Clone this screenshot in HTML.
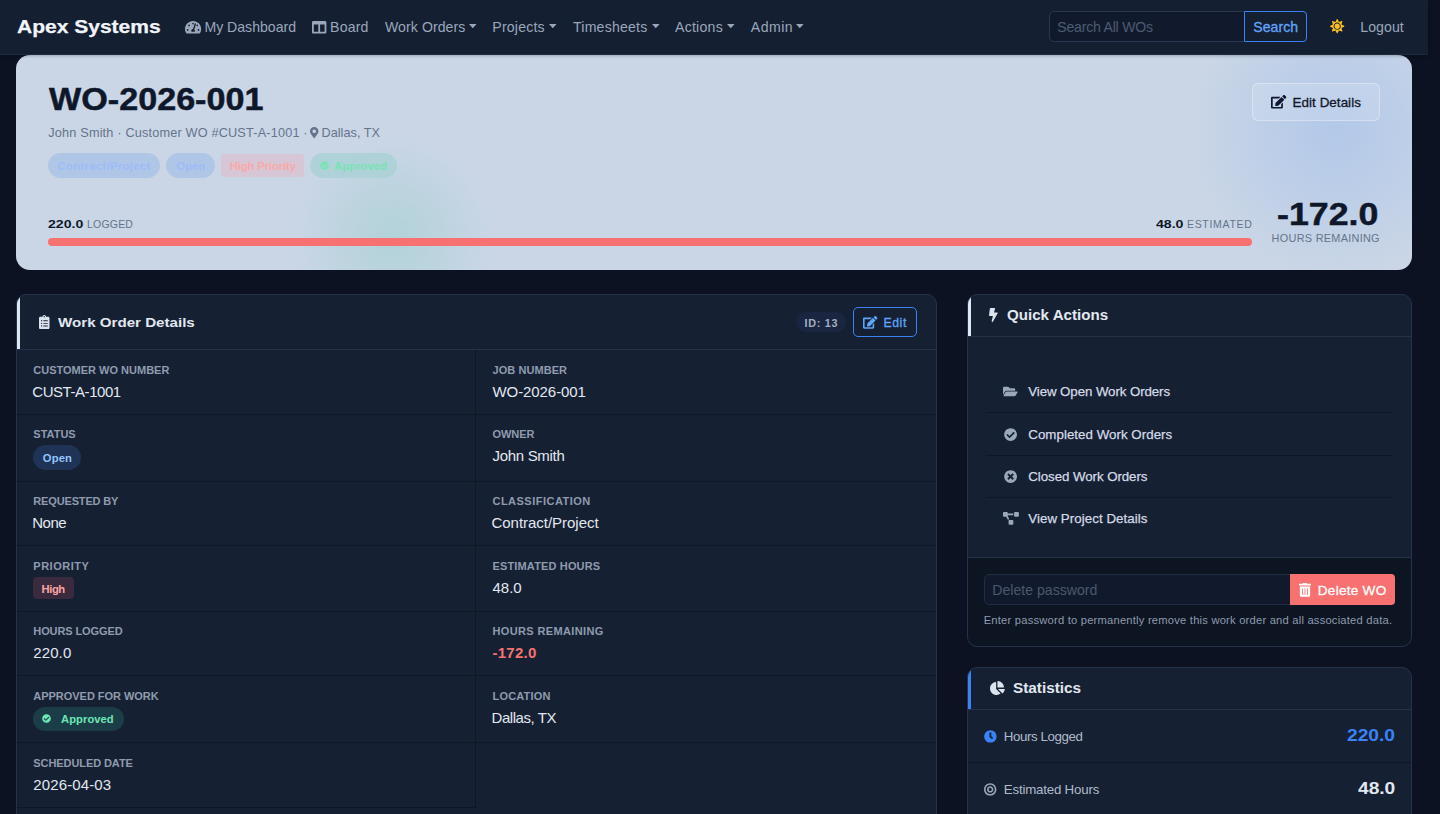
<!DOCTYPE html>
<html lang="en">
<head>
<meta charset="utf-8">
<title>WO-2026-001 · Apex Systems</title>
<style>
*{box-sizing:border-box;margin:0;padding:0}
html,body{width:1440px;height:814px;overflow:hidden}
body{background:#0c1221;font-family:"Liberation Sans",sans-serif;position:relative}
.t{position:absolute;white-space:nowrap;transform-origin:0 50%;display:block}
.b{position:absolute}
.ic{position:absolute;display:block;overflow:visible}
a{text-decoration:none}
h1,h2{font-weight:700}
#nav{position:absolute;left:0;top:0;width:1428px;height:55px;background:#151f32;border-bottom:1px solid #1f2b41;z-index:5;box-shadow:0 1px 3px rgba(0,0,0,.25)}
#search{position:absolute;left:1049px;top:11px;width:196px;height:31px;border:1px solid #293750;border-radius:5px 0 0 5px;background:#111a2c}
#sbtn{position:absolute;left:1244px;top:11px;width:63px;height:31px;border:1px solid #3b82f6;border-radius:0 4px 4px 0}
#hero{position:absolute;left:16px;top:55px;width:1396px;height:215px;border-radius:14px;overflow:hidden;background:
radial-gradient(circle at 1320px 75px, rgba(59,130,246,.16) 0, rgba(59,130,246,.09) 70px, rgba(59,130,246,0) 145px),
radial-gradient(circle at 377px 182px, rgba(16,185,129,.13) 0, rgba(16,185,129,.07) 50px, rgba(16,185,129,0) 100px),
#cad6e6}
.card{position:absolute;background:#162033;border:1px solid #24324a;border-radius:10px;overflow:hidden}
.hd{position:absolute;left:0;top:0;right:0;border-bottom:1px solid #24324a}
.hd .bar{position:absolute;left:0;top:0;bottom:0;width:3px;background:#dfe7f3}
</style>
</head>
<body>
<nav id="nav">
<div id="search"></div><div id="sbtn"></div><a class="t" style="font-size:18.9px;line-height:24px;color:#f1f5f9;font-weight:700;transform:scaleX(1.112);left:16.5px;top:15.0px;-webkit-text-stroke:.25px #f1f5f9;">Apex Systems</a>
<a class="t" style="font-size:14.1px;line-height:18px;color:#9aa7bb;left:204.4px;top:18.0px;">My Dashboard</a>
<a class="t" style="font-size:14.1px;line-height:18px;color:#9aa7bb;letter-spacing:0.17px;left:330.1px;top:18.0px;">Board</a>
<a class="t" style="font-size:14.1px;line-height:18px;color:#9aa7bb;letter-spacing:0.07px;left:385.0px;top:18.0px;">Work Orders</a>
<a class="t" style="font-size:14.1px;line-height:18px;color:#9aa7bb;letter-spacing:0.20px;left:492.3px;top:18.0px;">Projects</a>
<a class="t" style="font-size:14.1px;line-height:18px;color:#9aa7bb;letter-spacing:0.22px;left:573.0px;top:18.0px;">Timesheets</a>
<a class="t" style="font-size:14.1px;line-height:18px;color:#9aa7bb;letter-spacing:0.25px;left:675.0px;top:18.0px;">Actions</a>
<a class="t" style="font-size:14.1px;line-height:18px;color:#9aa7bb;letter-spacing:0.48px;left:750.8px;top:18.0px;">Admin</a>
<span class="t" style="font-size:14.1px;line-height:18px;color:#4d5b73;letter-spacing:-0.23px;left:1057.3px;top:18.0px;">Search All WOs</span>
<span class="t" style="font-size:14.1px;line-height:18px;color:#60a5fa;letter-spacing:0.02px;left:1253.3px;top:18.0px;-webkit-text-stroke:.3px #60a5fa;">Search</span>
<a class="t" style="font-size:14.1px;line-height:18px;color:#9aa7bb;letter-spacing:0.06px;left:1360.3px;top:18.0px;">Logout</a>
<svg class="ic" style="left:184.8px;top:19.5px" width="16.2" height="14.4" viewBox="0 0 576 512" fill="#9aa7bb"><path d="M288 32C128.940 32 0 160.940 0 320c0 52.800 14.250 102.260 39.060 144.800 5.610 9.620 16.300 15.200 27.440 15.200h443c11.140 0 21.830-5.580 27.440-15.200C561.750 422.260 576 372.800 576 320c0-159.060-128.940-288-288-288zm0 64c14.710 0 26.580 10.130 30.320 23.650-1.110 2.260-2.640 4.230-3.450 6.670l-9.220 27.670c-5.130 3.490-10.970 6.010-17.640 6.010-17.670 0-32-14.330-32-32S270.330 96 288 96zM96 384c-17.670 0-32-14.330-32-32s14.330-32 32-32 32 14.330 32 32-14.330 32-32 32zm48-160c-17.670 0-32-14.330-32-32s14.330-32 32-32 32 14.330 32 32-14.330 32-32 32zm246.770-72.410l-61.330 184C343.130 347.330 352 364.540 352 384c0 11.720-3.380 22.550-8.880 32H232.880c-5.500-9.450-8.880-20.280-8.880-32 0-33.940 26.500-61.430 59.900-63.590l61.340-184.010c4.170-12.560 17.730-19.450 30.360-15.170 12.570 4.190 19.350 17.790 15.170 30.360zm14.660 57.200l15.520-46.550c3.470-1.290 7.130-2.230 11.050-2.230 17.670 0 32 14.330 32 32s-14.330 32-32 32c-11.380-.01-20.890-6.280-26.570-15.220zM480 384c-17.670 0-32-14.330-32-32s14.330-32 32-32 32 14.330 32 32-14.330 32-32 32z"/></svg><svg class="ic" style="left:311.8px;top:19.5px" width="14.4" height="14.4" viewBox="0 0 512 512" fill="#9aa7bb"><path d="M464 32H48C21.490 32 0 53.490 0 80v352c0 26.510 21.490 48 48 48h416c26.510 0 48-21.490 48-48V80c0-26.510-21.490-48-48-48zM224 416H64V160h160v256zm224 0H288V160h160v256z"/></svg><svg class="ic" style="left:469.2px;top:24px" width="7.6" height="4.2" viewBox="0 0 7.6 4.2" fill="#9aa7bb"><path d="M0 0H7.6L3.8 4.2z"/></svg><svg class="ic" style="left:549.2px;top:24px" width="7.6" height="4.2" viewBox="0 0 7.6 4.2" fill="#9aa7bb"><path d="M0 0H7.6L3.8 4.2z"/></svg><svg class="ic" style="left:651.6px;top:24px" width="7.6" height="4.2" viewBox="0 0 7.6 4.2" fill="#9aa7bb"><path d="M0 0H7.6L3.8 4.2z"/></svg><svg class="ic" style="left:726.6px;top:24px" width="7.6" height="4.2" viewBox="0 0 7.6 4.2" fill="#9aa7bb"><path d="M0 0H7.6L3.8 4.2z"/></svg><svg class="ic" style="left:796.3px;top:24px" width="7.6" height="4.2" viewBox="0 0 7.6 4.2" fill="#9aa7bb"><path d="M0 0H7.6L3.8 4.2z"/></svg><svg class="ic" style="left:1330.4px;top:19.3px" width="14.4" height="14.4" viewBox="0 0 512 512" fill="#fbbf24"><path d="M256 160c-52.900 0-96 43.100-96 96s43.100 96 96 96 96-43.100 96-96-43.100-96-96-96zm246.400 80.500l-94.700-47.300 33.500-100.400c4.500-13.600-8.400-26.500-21.900-21.900l-100.400 33.500-47.400-94.800c-6.400-12.800-24.600-12.800-31 0l-47.300 94.700L92.700 70.800c-13.600-4.500-26.500 8.400-21.900 21.900l33.500 100.400-94.700 47.400c-12.800 6.400-12.800 24.600 0 31l94.700 47.300-33.500 100.500c-4.500 13.600 8.400 26.500 21.900 21.900l100.400-33.500 47.300 94.700c6.400 12.800 24.600 12.800 31 0l47.300-94.700 100.400 33.500c13.600 4.500 26.500-8.400 21.900-21.900l-33.500-100.400 94.700-47.300c13-6.500 13-24.700.2-31.100zm-155.900 106c-49.900 49.900-131.100 49.900-181 0-49.900-49.900-49.900-131.100 0-181 49.900-49.900 131.100-49.900 181 0 49.900 49.900 49.900 131.100 0 181z"/></svg>
</nav>
<section id="hero">
<div class="b" style="left:32px;top:98px;width:112px;height:25px;border-radius:13px;background:#b0c6e6"></div><div class="b" style="left:149.8px;top:98px;width:49.2px;height:25px;border-radius:13px;background:#b0c6e6"></div><div class="b" style="left:205px;top:99px;width:83px;height:23px;border-radius:4px;background:#d6c6d6"></div><div class="b" style="left:294px;top:98px;width:87px;height:25px;border-radius:13px;background:#aed2d8"></div><div class="b" style="left:32px;top:183px;width:1204px;height:8px;border-radius:4px;background:#f87171"></div><div class="b" style="left:1236px;top:28px;width:128px;height:38px;border-radius:6px;border:1px solid rgba(255,255,255,.32);background:rgba(255,255,255,.13)"></div><svg class="ic" style="left:294.1px;top:72.3px" width="8.48" height="11.3" viewBox="0 0 384 512" fill="#64748b"><path d="M172.268 501.670C26.970 291.031 0 269.413 0 192 0 85.961 85.961 0 192 0s192 85.961 192 192c0 77.413-26.970 99.031-172.268 309.670-9.535 13.774-29.930 13.773-39.464 0zM192 272c44.183 0 80-35.817 80-80s-35.817-80-80-80-80 35.817-80 80 35.817 80 80 80z"/></svg><svg class="ic" style="left:303.9px;top:106px" width="9.0" height="9" viewBox="0 0 512 512" fill="#78e3b4"><path d="M504 256c0 136.967-111.033 248-248 248S8 392.967 8 256 119.033 8 256 8s248 111.033 248 248zM227.314 387.314l184-184c6.248-6.248 6.248-16.379 0-22.627l-22.627-22.627c-6.248-6.249-16.379-6.249-22.628 0L216 308.118l-69.373-69.373c-6.248-6.248-16.379-6.248-22.628 0l-22.627 22.627c-6.248 6.248-6.248 16.379 0 22.627l104 104c6.249 6.249 16.379 6.249 22.628.001z"/></svg><svg class="ic" style="left:1254.9px;top:40px" width="15.3" height="13.6" viewBox="0 0 576 512" fill="#0f172a"><path d="M402.600 83.200l90.200 90.200c3.800 3.800 3.800 10 0 13.800L274.400 405.600l-92.800 10.300c-12.400 1.400-22.900-9.100-21.500-21.500l10.300-92.800L388.800 83.200c3.800-3.800 10-3.800 13.800 0zm162-22.900l-48.800-48.800c-15.200-15.200-39.900-15.200-55.200 0l-35.400 35.400c-3.800 3.800-3.800 10 0 13.800l90.200 90.200c3.800 3.800 10 3.800 13.800 0l35.400-35.400c15.200-15.300 15.200-40 0-55.200zM384 346.200V448H64V128h229.800c3.200 0 6.200-1.300 8.500-3.500l40-40c7.600-7.600 2.200-20.500-8.500-20.500H48C21.500 64 0 85.500 0 112v352c0 26.500 21.500 48 48 48h352c26.500 0 48-21.500 48-48V306.200c0-10.700-12.900-16-20.500-8.500l-40 40c-2.200 2.300-3.500 5.300-3.500 8.500z"/></svg><h1 class="t" style="font-size:31.3px;line-height:40px;color:#0f172a;font-weight:700;transform:scaleX(1.091);left:32.9px;top:25.3px;-webkit-text-stroke:.5px #0f172a;">WO-2026-001</h1>
<span class="t" style="font-size:12.7px;line-height:16px;color:#64748b;letter-spacing:0.18px;left:32.3px;top:69.9px;">John Smith · Customer WO #CUST-A-1001 ·</span>
<span class="t" style="font-size:12.7px;line-height:16px;color:#64748b;letter-spacing:0.02px;left:305.5px;top:69.9px;">Dallas, TX</span>
<span class="t" style="font-size:11.2px;line-height:14px;color:#9bbcf9;font-weight:700;letter-spacing:0.37px;left:41.5px;top:104.0px;">Contract/Project</span>
<span class="t" style="font-size:11.2px;line-height:14px;color:#9bbcf9;font-weight:700;letter-spacing:0.13px;left:160.3px;top:104.0px;">Open</span>
<span class="t" style="font-size:11.2px;line-height:14px;color:#fba9a6;font-weight:700;letter-spacing:-0.07px;left:213.7px;top:104.0px;">High Priority</span>
<span class="t" style="font-size:11.2px;line-height:14px;color:#78e3b4;font-weight:700;letter-spacing:0.07px;left:318.2px;top:104.0px;">Approved</span>
<span class="t" style="font-size:10.9px;line-height:14px;color:#0f172a;font-weight:700;transform:scaleX(1.296);left:32.3px;top:161.8px;">220.0</span>
<span class="t" style="font-size:10.5px;line-height:14px;color:#64748b;letter-spacing:0.20px;left:71.0px;top:161.8px;">LOGGED</span>
<span class="t" style="font-size:10.9px;line-height:14px;color:#0f172a;font-weight:700;transform:scaleX(1.295);left:1140.0px;top:161.8px;">48.0</span>
<span class="t" style="font-size:10.5px;line-height:14px;color:#64748b;letter-spacing:0.68px;left:1171.0px;top:161.8px;">ESTIMATED</span>
<span class="t" style="font-size:31.5px;line-height:40px;color:#0f172a;font-weight:700;transform:scaleX(1.134);left:1261.3px;top:138.6px;-webkit-text-stroke:.5px #0f172a;">-172.0</span>
<span class="t" style="font-size:10.9px;line-height:14px;color:#64748b;letter-spacing:0.28px;left:1255.6px;top:176.1px;">HOURS REMAINING</span>
<span class="t" style="font-size:13.4px;line-height:17px;color:#0f172a;letter-spacing:0.05px;left:1276.6px;top:39.0px;-webkit-text-stroke:.3px #0f172a;">Edit Details</span>
</section>
<section class="card" id="wod" style="left:16px;top:294px;width:921px;height:560px">
<div class="hd" style="height:55px"><div class="bar"></div></div><div class="b" style="left:0px;top:119px;width:919px;height:1px;background:#0f1727"></div><div class="b" style="left:0px;top:186px;width:919px;height:1px;background:#0f1727"></div><div class="b" style="left:0px;top:250px;width:919px;height:1px;background:#0f1727"></div><div class="b" style="left:0px;top:316px;width:919px;height:1px;background:#0f1727"></div><div class="b" style="left:0px;top:380px;width:919px;height:1px;background:#0f1727"></div><div class="b" style="left:0px;top:447px;width:919px;height:1px;background:#0f1727"></div><div class="b" style="left:0px;top:512px;width:459px;height:1px;background:#0f1727"></div><div class="b" style="left:458px;top:55px;width:1px;height:458px;background:#0f1727"></div><svg class="ic" style="left:21.6px;top:20.1px" width="10.5" height="14" viewBox="0 0 384 512" fill="#dbe3ee"><path d="M336 64h-80c0-35.300-28.700-64-64-64s-64 28.700-64 64H48C21.500 64 0 85.500 0 112v352c0 26.500 21.500 48 48 48h288c26.500 0 48-21.500 48-48V112c0-26.500-21.500-48-48-48zM96 424c-13.300 0-24-10.700-24-24s10.700-24 24-24 24 10.700 24 24-10.700 24-24 24zm0-96c-13.300 0-24-10.700-24-24s10.700-24 24-24 24 10.700 24 24-10.700 24-24 24zm0-96c-13.300 0-24-10.700-24-24s10.700-24 24-24 24 10.700 24 24-10.700 24-24 24zm96-192c13.300 0 24 10.700 24 24s-10.700 24-24 24-24-10.700-24-24 10.700-24 24-24zm128 368c0 4.400-3.600 8-8 8H168c-4.400 0-8-3.600-8-8v-16c0-4.400 3.600-8 8-8h144c4.400 0 8 3.600 8 8v16zm0-96c0 4.400-3.600 8-8 8H168c-4.400 0-8-3.600-8-8v-16c0-4.400 3.600-8 8-8h144c4.400 0 8 3.600 8 8v16zm0-96c0 4.400-3.600 8-8 8H168c-4.400 0-8-3.600-8-8v-16c0-4.400 3.600-8 8-8h144c4.400 0 8 3.600 8 8v16z"/></svg><div class="b" style="left:779px;top:17px;width:50px;height:20px;border-radius:10px;background:#1a2641"></div><div class="b" style="left:836px;top:12px;width:64px;height:30px;border-radius:5px;border:1px solid #3b82f6"></div><svg class="ic" style="left:846px;top:21px" width="14.4" height="12.8" viewBox="0 0 576 512" fill="#60a5fa"><path d="M402.600 83.200l90.200 90.200c3.800 3.800 3.800 10 0 13.800L274.400 405.600l-92.800 10.300c-12.400 1.400-22.900-9.100-21.500-21.500l10.300-92.800L388.800 83.200c3.800-3.800 10-3.800 13.800 0zm162-22.900l-48.800-48.800c-15.200-15.200-39.900-15.200-55.200 0l-35.400 35.400c-3.800 3.800-3.800 10 0 13.800l90.200 90.200c3.800 3.800 10 3.800 13.800 0l35.400-35.400c15.200-15.300 15.200-40 0-55.200zM384 346.200V448H64V128h229.800c3.200 0 6.200-1.300 8.500-3.500l40-40c7.600-7.600 2.200-20.500-8.500-20.500H48C21.500 64 0 85.500 0 112v352c0 26.500 21.500 48 48 48h352c26.500 0 48-21.500 48-48V306.200c0-10.700-12.900-16-20.500-8.500l-40 40c-2.200 2.300-3.500 5.300-3.500 8.500z"/></svg><div class="b" style="left:16px;top:150px;width:48px;height:25px;border-radius:13px;background:#1e3356"></div><div class="b" style="left:16px;top:282px;width:41px;height:22px;border-radius:4px;background:#3a2a3e"></div><div class="b" style="left:16px;top:412px;width:91px;height:24px;border-radius:12px;background:#1b3d47"></div><svg class="ic" style="left:25.4px;top:419.3px" width="9.0" height="9" viewBox="0 0 512 512" fill="#6ee7b7"><path d="M504 256c0 136.967-111.033 248-248 248S8 392.967 8 256 119.033 8 256 8s248 111.033 248 248zM227.314 387.314l184-184c6.248-6.248 6.248-16.379 0-22.627l-22.627-22.627c-6.248-6.249-16.379-6.249-22.628 0L216 308.118l-69.373-69.373c-6.248-6.248-16.379-6.248-22.628 0l-22.627 22.627c-6.248 6.248-6.248 16.379 0 22.627l104 104c6.249 6.249 16.379 6.249 22.628.001z"/></svg><h2 class="t" style="font-size:13.6px;line-height:17px;color:#e2e8f0;font-weight:700;transform:scaleX(1.113);left:40.8px;top:18.7px;">Work Order Details</h2>
<span class="t" style="font-size:10.8px;line-height:14px;color:#a3afc0;font-weight:700;letter-spacing:0.68px;left:787.6px;top:20.8px;">ID: 13</span>
<span class="t" style="font-size:12.2px;line-height:16px;color:#60a5fa;letter-spacing:0.60px;left:866.5px;top:19.8px;-webkit-text-stroke:.3px #60a5fa;">Edit</span>
<span class="t" style="font-size:11.0px;line-height:14px;color:#8f9bae;font-weight:700;left:16.3px;top:68.0px;">CUSTOMER WO NUMBER</span>
<span class="t" style="font-size:15.0px;line-height:19px;color:#e2e8f0;letter-spacing:-0.45px;left:15.3px;top:87.0px;">CUST-A-1001</span>
<span class="t" style="font-size:11.0px;line-height:14px;color:#8f9bae;font-weight:700;left:16.3px;top:132.0px;">STATUS</span>
<span class="t" style="font-size:11.0px;line-height:14px;color:#8f9bae;font-weight:700;letter-spacing:-0.15px;left:16.3px;top:199.0px;">REQUESTED BY</span>
<span class="t" style="font-size:15.0px;line-height:19px;color:#e2e8f0;letter-spacing:-0.53px;left:15.3px;top:218.0px;">None</span>
<span class="t" style="font-size:11.0px;line-height:14px;color:#8f9bae;font-weight:700;letter-spacing:0.50px;left:16.3px;top:264.0px;">PRIORITY</span>
<span class="t" style="font-size:11.0px;line-height:14px;color:#8f9bae;font-weight:700;letter-spacing:-0.10px;left:16.3px;top:329.0px;">HOURS LOGGED</span>
<span class="t" style="font-size:15.0px;line-height:19px;color:#e2e8f0;letter-spacing:0.10px;left:16.3px;top:348.0px;">220.0</span>
<span class="t" style="font-size:11.0px;line-height:14px;color:#8f9bae;font-weight:700;letter-spacing:-0.03px;left:16.3px;top:394.0px;">APPROVED FOR WORK</span>
<span class="t" style="font-size:11.0px;line-height:14px;color:#8f9bae;font-weight:700;letter-spacing:-0.08px;left:16.3px;top:461.0px;">SCHEDULED DATE</span>
<span class="t" style="font-size:15.0px;line-height:19px;color:#e2e8f0;letter-spacing:0.12px;left:16.3px;top:480.0px;">2026-04-03</span>
<span class="t" style="font-size:11.0px;line-height:14px;color:#8f9bae;font-weight:700;letter-spacing:0.06px;left:475.5px;top:68.0px;">JOB NUMBER</span>
<span class="t" style="font-size:15.0px;line-height:19px;color:#e2e8f0;letter-spacing:-0.08px;left:475.5px;top:87.0px;">WO-2026-001</span>
<span class="t" style="font-size:11.0px;line-height:14px;color:#8f9bae;font-weight:700;letter-spacing:-0.05px;left:475.5px;top:132.0px;">OWNER</span>
<span class="t" style="font-size:15.0px;line-height:19px;color:#e2e8f0;letter-spacing:-0.31px;left:475.5px;top:151.0px;">John Smith</span>
<span class="t" style="font-size:11.0px;line-height:14px;color:#8f9bae;font-weight:700;letter-spacing:0.48px;left:475.5px;top:199.0px;">CLASSIFICATION</span>
<span class="t" style="font-size:15.0px;line-height:19px;color:#e2e8f0;letter-spacing:-0.03px;left:474.5px;top:218.0px;">Contract/Project</span>
<span class="t" style="font-size:11.0px;line-height:14px;color:#8f9bae;font-weight:700;letter-spacing:0.15px;left:475.5px;top:264.0px;">ESTIMATED HOURS</span>
<span class="t" style="font-size:15.0px;line-height:19px;color:#e2e8f0;left:475.5px;top:283.0px;">48.0</span>
<span class="t" style="font-size:11.0px;line-height:14px;color:#8f9bae;font-weight:700;letter-spacing:0.37px;left:475.5px;top:329.0px;">HOURS REMAINING</span>
<span class="t" style="font-size:15.0px;line-height:19px;color:#f87171;font-weight:700;letter-spacing:0.24px;left:475.5px;top:348.0px;">-172.0</span>
<span class="t" style="font-size:11.0px;line-height:14px;color:#8f9bae;font-weight:700;letter-spacing:0.19px;left:475.5px;top:394.0px;">LOCATION</span>
<span class="t" style="font-size:15.0px;line-height:19px;color:#e2e8f0;letter-spacing:-0.44px;left:474.5px;top:412.6px;">Dallas, TX</span>
<span class="t" style="font-size:11.2px;line-height:14px;color:#93c5fd;font-weight:700;letter-spacing:0.17px;left:25.8px;top:155.9px;">Open</span>
<span class="t" style="font-size:11.2px;line-height:14px;color:#fca5a5;font-weight:700;letter-spacing:-0.40px;left:24.5px;top:287.1px;">High</span>
<span class="t" style="font-size:11.2px;line-height:14px;color:#6ee7b7;font-weight:700;letter-spacing:0.07px;left:44.0px;top:417.1px;">Approved</span>
</section>
<section class="card" id="qac" style="left:967px;top:294px;width:445px;height:353px">
<div class="hd" style="height:42px"><div class="bar"></div></div><svg class="ic" style="left:21.4px;top:13px" width="8.75" height="14" viewBox="0 0 320 512" fill="#dbe3ee"><path d="M296 160H180.600l42.600-129.800C227.200 15 215.700 0 200 0H56C44 0 33.800 8.900 32.200 20.800l-32 240C-1.700 275.200 9.500 288 24 288h118.700L96.600 482.500c-3.600 15.200 8 29.500 23.300 29.500 8.400 0 16.400-4.400 20.800-12l176-304c9.300-15.900-2.200-36-20.700-36z"/></svg><div class="b" style="left:18px;top:117px;width:407px;height:1px;background:#0f1727"></div><div class="b" style="left:18px;top:160px;width:407px;height:1px;background:#0f1727"></div><div class="b" style="left:18px;top:202px;width:407px;height:1px;background:#0f1727"></div><svg class="ic" style="left:35px;top:89.6px" width="14.62" height="13" viewBox="0 0 576 512" fill="#9aa8bc"><path d="M572.694 292.093L500.270 416.248A63.997 63.997 0 0 1 444.989 448H45.025c-18.523 0-30.064-20.093-20.731-36.093l72.424-124.155A64 64 0 0 1 152 256h399.964c18.523 0 30.064 20.093 20.730 36.093zM152 224h328v-48c0-26.510-21.490-48-48-48H272l-64-64H48C21.490 64 0 85.490 0 112v278.046l69.077-118.418C86.214 242.250 117.989 224 152 224z"/></svg><svg class="ic" style="left:36px;top:132.55px" width="13.2" height="13.2" viewBox="0 0 512 512" fill="#9aa8bc"><path d="M504 256c0 136.967-111.033 248-248 248S8 392.967 8 256 119.033 8 256 8s248 111.033 248 248zM227.314 387.314l184-184c6.248-6.248 6.248-16.379 0-22.627l-22.627-22.627c-6.248-6.249-16.379-6.249-22.628 0L216 308.118l-69.373-69.373c-6.248-6.248-16.379-6.248-22.628 0l-22.627 22.627c-6.248 6.248-6.248 16.379 0 22.627l104 104c6.249 6.249 16.379 6.249 22.628.001z"/></svg><svg class="ic" style="left:36px;top:174.8px" width="13.2" height="13.2" viewBox="0 0 512 512" fill="#9aa8bc"><path d="M256 8C119 8 8 119 8 256s111 248 248 248 248-111 248-248S393 8 256 8zm121.6 313.1c4.700 4.700 4.700 12.300 0 17L338 377.600c-4.700 4.700-12.300 4.700-17 0L256 312l-65.100 65.600c-4.700 4.700-12.300 4.700-17 0L134.400 338c-4.700-4.700-4.700-12.300 0-17l65.600-65-65.600-65.100c-4.700-4.700-4.700-12.300 0-17l39.600-39.600c4.700-4.700 12.300-4.700 17 0l65 65.700 65.100-65.600c4.700-4.700 12.300-4.700 17 0l39.600 39.600c4.700 4.700 4.700 12.300 0 17L312 256l65.600 65.100z"/></svg><svg class="ic" style="left:34.5px;top:217px" width="15.88" height="12.7" viewBox="0 0 640 512" fill="#9aa8bc"><path d="M384 320H256c-17.670 0-32 14.330-32 32v128c0 17.670 14.330 32 32 32h128c17.670 0 32-14.330 32-32V352c0-17.670-14.330-32-32-32zM192 32c0-17.670-14.330-32-32-32H32C14.330 0 0 14.330 0 32v128c0 17.670 14.330 32 32 32h95.720l73.160 128.040C211.980 300.980 232.400 288 256 288h.28L192 175.510V128h224V64H192V32zM608 0H480c-17.670 0-32 14.330-32 32v128c0 17.670 14.330 32 32 32h128c17.670 0 32-14.330 32-32V32c0-17.670-14.330-32-32-32z"/></svg><div class="b" style="left:0px;top:262px;width:443px;height:89px;background:#0d1422;border-top:1px solid #24324a;border-radius:0 0 9px 9px"></div><div class="b" style="left:16px;top:279px;width:307px;height:31px;border-radius:5px 0 0 5px;border:1px solid #212d43;background:#111a2c"></div><div class="b" style="left:322px;top:279px;width:105px;height:31px;border-radius:0 4px 4px 0;background:#f87171"></div><svg class="ic" style="left:330.8px;top:288px" width="11.99" height="13.7" viewBox="0 0 448 512" fill="#ffffff"><path d="M32 464a48 48 0 0 0 48 48h288a48 48 0 0 0 48-48V128H32zm272-256a16 16 0 0 1 32 0v224a16 16 0 0 1-32 0zm-96 0a16 16 0 0 1 32 0v224a16 16 0 0 1-32 0zm-96 0a16 16 0 0 1 32 0v224a16 16 0 0 1-32 0zM432 32H312l-9.400-18.700A24 24 0 0 0 281.100 0H166.800a23.720 23.720 0 0 0-21.400 13.300L136 32H16A16 16 0 0 0 0 48v32a16 16 0 0 0 16 16h416a16 16 0 0 0 16-16V48a16 16 0 0 0-16-16z"/></svg><h2 class="t" style="font-size:13.9px;line-height:18px;color:#e2e8f0;font-weight:700;transform:scaleX(1.089);left:39.0px;top:11.0px;">Quick Actions</h2>
<a class="t" style="font-size:13.3px;line-height:17px;color:#d3dae5;letter-spacing:-0.09px;left:60.3px;top:88.2px;-webkit-text-stroke:.25px #d3dae5;">View Open Work Orders</a>
<a class="t" style="font-size:13.3px;line-height:17px;color:#d3dae5;letter-spacing:0.04px;left:60.3px;top:131.2px;-webkit-text-stroke:.25px #d3dae5;">Completed Work Orders</a>
<a class="t" style="font-size:13.3px;line-height:17px;color:#d3dae5;letter-spacing:-0.06px;left:60.3px;top:173.2px;-webkit-text-stroke:.25px #d3dae5;">Closed Work Orders</a>
<a class="t" style="font-size:13.3px;line-height:17px;color:#d3dae5;letter-spacing:0.06px;left:60.3px;top:215.0px;-webkit-text-stroke:.25px #d3dae5;">View Project Details</a>
<span class="t" style="font-size:14.1px;line-height:18px;color:#4a586e;left:24.3px;top:286.0px;">Delete password</span>
<span class="t" style="font-size:13.6px;line-height:17px;color:#ffffff;letter-spacing:0.25px;left:349.8px;top:286.7px;-webkit-text-stroke:.3px #fff;">Delete WO</span>
<span class="t" style="font-size:11.2px;line-height:14px;color:#8f9bae;letter-spacing:0.21px;left:15.7px;top:318.2px;">Enter password to permanently remove this work order and all associated data.</span>
</section>
<section class="card" id="stc" style="left:967px;top:667px;width:445px;height:200px">
<div class="hd" style="height:42px"><div class="bar" style="background:#3b82f6"></div></div><svg class="ic" style="left:21.6px;top:13px" width="14.88" height="14" viewBox="0 0 544 512" fill="#dbe3ee"><path d="M527.790 288H290.500l158.030 158.030c6.040 6.040 15.980 6.530 22.190.68 38.700-36.460 65.320-85.610 73.130-140.860 1.340-9.460-6.510-17.850-16.060-17.850zm-15.830-64.800C503.720 103.740 408.260 8.280 288.800.04 279.680-.59 272 7.100 272 16.240V240h223.770c9.140 0 16.820-7.680 16.190-16.800zM224 288V50.710c0-9.550-8.390-17.400-17.840-16.060C86.990 51.490-4.100 155.600.14 280.370 4.500 408.510 114.830 513.590 243.030 511.980c50.400-.63 96.970-16.870 135.260-44.030 7.900-5.600 8.420-17.230 1.570-24.080L224 288z"/></svg><div class="b" style="left:0px;top:94px;width:443px;height:1px;background:#0f1727"></div><svg class="ic" style="left:15.9px;top:62px" width="12.8" height="12.8" viewBox="0 0 512 512" fill="#3b82f6"><path d="M256 8C119 8 8 119 8 256s111 248 248 248 248-111 248-248S393 8 256 8zm57.100 350.100L224.900 294c-3.100-2.300-4.900-5.900-4.900-9.700V116c0-6.600 5.400-12 12-12h48c6.600 0 12 5.400 12 12v137.700l63.500 46.200c5.400 3.900 6.500 11.400 2.600 16.800l-28.200 38.800c-3.900 5.300-11.400 6.500-16.800 2.600z"/></svg><svg class="ic" style="left:16px;top:115.2px" width="12.4" height="12.8" viewBox="0 0 496 512" fill="#9aa7bb"><path d="M248 8C111.030 8 0 119.030 0 256s111.030 248 248 248 248-111.030 248-248S384.970 8 248 8zm0 432c-101.690 0-184-82.290-184-184 0-101.690 82.290-184 184-184 101.690 0 184 82.290 184 184 0 101.690-82.290 184-184 184zm0-312c-70.690 0-128 57.310-128 128s57.310 128 128 128 128-57.310 128-128-57.310-128-128-128zm0 192c-35.290 0-64-28.710-64-64s28.710-64 64-64 64 28.710 64 64-28.710 64-64 64z"/></svg><h2 class="t" style="font-size:13.9px;line-height:18px;color:#e2e8f0;font-weight:700;transform:scaleX(1.103);left:44.6px;top:11.0px;">Statistics</h2>
<span class="t" style="font-size:13.3px;line-height:17px;color:#b0bbca;letter-spacing:-0.41px;left:35.8px;top:60.3px;">Hours Logged</span>
<span class="t" style="font-size:13.3px;line-height:17px;color:#b0bbca;letter-spacing:-0.20px;left:35.8px;top:113.3px;">Estimated Hours</span>
<span class="t" style="font-size:16.0px;line-height:20px;color:#3b82f6;font-weight:700;transform:scaleX(1.200);left:378.8px;top:57.9px;">220.0</span>
<span class="t" style="font-size:16.0px;line-height:20px;color:#e2e8f0;font-weight:700;transform:scaleX(1.197);left:389.7px;top:110.6px;">48.0</span>
</section>
</body>
</html>
